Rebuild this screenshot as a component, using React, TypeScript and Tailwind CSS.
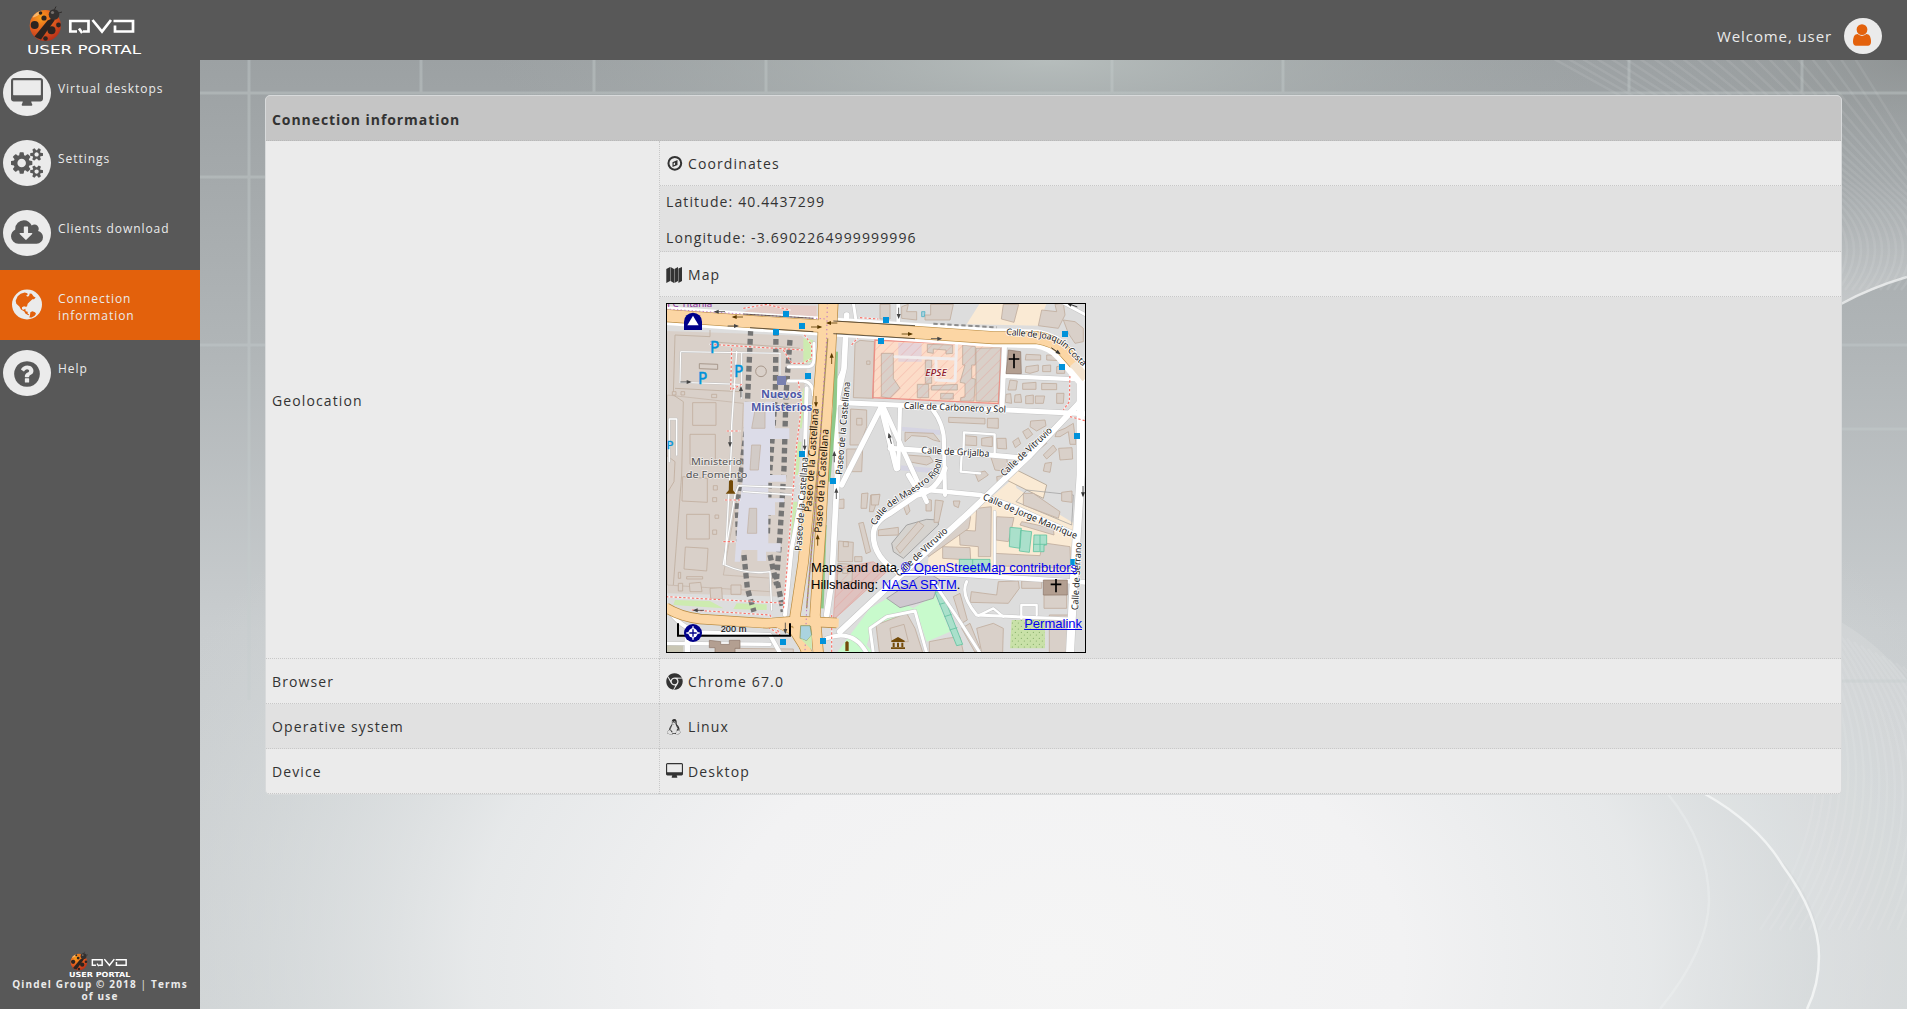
import React from "react";
import { FaChrome, FaLinux } from "react-icons/fa";

const ICONS = {
  desktop:
    "M1792 992v-832q0-13-9.5-22.5t-22.5-9.5h-1600q-13 0-22.5 9.5t-9.5 22.5v832q0 13 9.5 22.5t22.5 9.5h1600q13 0 22.5-9.5t9.5-22.5zm128-832v1088q0 66-47 113t-113 47h-544q0 37 16 77.5t32 71 16 43.5q0 26-19 45t-45 19h-512q-26 0-45-19t-19-45q0-14 16-44t32-70 16-78h-544q-66 0-113-47t-47-113v-1088q0-66 47-113t113-47h1600q66 0 113 47t47 113z",
  cogs:
    "M896 896q0-106-75-181t-181-75-181 75-75 181 75 181 181 75 181-75 75-181zm768 512q0-52-38-90t-90-38-90 38-38 90q0 53 37.5 90.5t90.5 37.5 90.5-37.5 37.5-90.5zm0-1024q0-52-38-90t-90-38-90 38-38 90q0 53 37.5 90.5t90.5 37.5 90.5-37.5 37.5-90.5zm-384 421v185q0 10-7 19.5t-16 10.5l-155 24q-11 35-32 76 34 48 90 115 7 11 7 20 0 12-7 19-23 30-82.5 89.5t-78.5 59.5q-11 0-21-7l-115-90q-37 19-77 31-11 108-23 155-7 24-30 24h-186q-11 0-20-7.5t-10-17.5l-23-153q-34-10-75-31l-118 89q-7 7-20 7-11 0-21-8-144-133-144-160 0-9 7-19 10-14 41-53t47-61q-23-44-35-82l-152-24q-10-1-17-9.5t-7-19.5v-185q0-10 7-19.5t16-10.5l155-24q11-35 32-76-34-48-90-115-7-11-7-20 0-12 7-20 22-30 82-89t79-59q11 0 21 7l115 90q34-18 77-32 11-108 23-154 7-24 30-24h186q11 0 20 7.5t10 17.5l23 153q34 10 75 31l118-89q8-7 20-7 11 0 21 8 144 133 144 160 0 8-7 19-12 16-42 54t-45 60q23 48 34 82l152 23q10 2 17 10.5t7 19.5zm640 533v140q0 16-149 31-12 27-30 52 51 113 51 138 0 4-4 7-122 71-124 71-8 0-46-47t-52-68q-20 2-30 2t-30-2q-14 21-52 68t-46 47q-2 0-124-71-4-3-4-7 0-25 51-138-18-25-30-52-149-15-149-31v-140q0-16 149-31 13-29 30-52-51-113-51-138 0-4 4-7 4-2 35-20t59-34 30-16q8 0 46 46.5t52 67.5q20-2 30-2t30 2q51-71 92-112l6-2q4 0 124 70 4 3 4 7 0 25-51 138 17 23 30 52 149 15 149 31zm0-1024v140q0 16-149 31-12 27-30 52 51 113 51 138 0 4-4 7-122 71-124 71-8 0-46-47t-52-68q-20 2-30 2t-30-2q-14 21-52 68t-46 47q-2 0-124-71-4-3-4-7 0-25 51-138-18-25-30-52-149-15-149-31v-140q0-16 149-31 13-29 30-52-51-113-51-138 0-4 4-7 4-2 35-20t59-34 30-16q8 0 46 46.5t52 67.5q20-2 30-2t30 2q51-71 92-112l6-2q4 0 124 70 4 3 4 7 0 25-51 138 17 23 30 52 149 15 149 31z",
  cloud:
    "M1280 928q0-14-9-23t-23-9h-224v-352q0-13-9.5-22.5t-22.5-9.5h-192q-13 0-22.5 9.5t-9.5 22.5v352h-224q-13 0-22.5 9.5t-9.5 22.5q0 14 9 23l352 352q9 9 23 9t23-9l351-351q10-12 10-24zm640 224q0 159-112.5 271.5t-271.5 112.5h-1088q-185 0-316.5-131.5t-131.5-316.5q0-130 70-240t188-165q-2-30-2-43 0-212 150-362t362-150q156 0 285.5 87t188.5 231q71-62 166-62 106 0 181 75t75 181q0 76-41 138 130 31 213.5 135.5t83.500 238.500z",
  question:
    "M1024 1376v-192q0-14-9-23t-23-9h-192q-14 0-23 9t-9 23v192q0 14 9 23t23 9h192q14 0 23-9t9-23zm256-672q0-88-55.5-163t-138.5-116-170-41q-243 0-371 213-15 24 8 42l132 100q7 6 19 6 16 0 25-12 53-68 86-92 34-24 86-24 48 0 85.5 26t37.5 59q0 38-20 61t-68 45q-63 28-115.5 86.5t-52.5 125.5v36q0 14 9 23t23 9h192q14 0 23-9t9-23q0-19 21.5-49.5t54.5-49.5q32-18 49-28.5t46-35 44.5-48 28-60.5 12.5-81zm384 192q0 209-103 385.5t-279.5 279.5-385.5 103-385.5-103-279.5-279.5-103-385.5 103-385.5 279.5-279.5 385.5-103 385.5 103 279.5 279.5 103 385.5z",
  user:
    "M1536 1399q0 109-62.5 187t-150.5 78h-854q-88 0-150.5-78t-62.5-187q0-85 8.5-160.5t31.5-152 58.5-131 94-89 134.5-34.5q131 128 313 128t313-128q76 0 134.5 34.5t94 89 58.5 131 31.5 152 8.5 160.5zm-256-887q0 159-112.5 271.5t-271.5 112.5-271.5-112.5-112.5-271.5 112.5-271.5 271.5-112.5 271.5 112.5 112.5 271.5z",
};

function Glyph({ d, vb, className }: { d: string; vb: string; className: string }) {
  return (
    <svg viewBox={vb} className={className} fill="currentColor">
      <path d={d} />
    </svg>
  );
}

function Logo({ className }: { className: string }) {
  return (
    <svg viewBox="27 5 115 50" className={className}>
      <defs>
        <radialGradient id="bug" cx="0.35" cy="0.25" r="0.8">
          <stop offset="0" stopColor="#f9a01b" />
          <stop offset="0.5" stopColor="#e5601f" />
          <stop offset="1" stopColor="#b52f1a" />
        </radialGradient>
      </defs>
      <circle cx="45.3" cy="25.5" r="15.6" fill="url(#bug)" />
      <path d="M32.500 17a15.600 15.600 0 0 1 9-6.500q0 4-8 7z" fill="#ffd9a0" opacity="0.600" />
      <g fill="#2d2420">
        <path d="M34.500 36.500 47.500 20.500l7-3 0 3-13.500 19q-4-1-6.500-3z" />
        <circle cx="44" cy="18" r="2.600" />
        <circle cx="34.700" cy="25" r="4" />
        <circle cx="40.500" cy="13" r="1.800" />
        <circle cx="51.500" cy="30.300" r="4" />
        <circle cx="58.500" cy="25" r="2.400" />
        <circle cx="45.500" cy="38.500" r="2.300" />
      </g>
      <circle cx="54" cy="14.500" r="5.300" fill="#33302f" />
      <circle cx="52.500" cy="12.500" r="1.600" fill="#77706c" />
      <path d="M54.500 9.500 56 6.500M58.500 13l3.500-1" stroke="#2a2726" strokeWidth="0.900" fill="none" />
      <g fill="none" stroke="#fff" strokeWidth="2.700">
        <path d="M77 31.500H70.300V21H88.500v10.500H83M79 28.500l3.200 4.500" />
        <path d="M92.500 20l9.500 11.500L111 20" />
        <path d="M113.500 21H133v10.500H115V25.500" />
      </g>
      <text
        x="27"
        y="54"
        fontFamily="DejaVu Sans"
        fontSize="13"
        fill="#fff"
        textLength="114"
        letterSpacing="0"
        lengthAdjust="spacingAndGlyphs"
      >
        USER PORTAL
      </text>
    </svg>
  );
}

function Globe() {
  return (
    <svg viewBox="0 0 90 92" className="h-[31px] w-[30px]">
      <circle cx="45" cy="46" r="45" fill="#ebebeb" />
      <path
        fill="#e3610c"
        d="M17 21l9-7 12-4 8 2 1 5-5 3 6 3 4-5 1-5 6 1 6 8 6 3-5 5-5 0-8 8-6 6-2 8-4 1-5-2-6 3 0 6 5 2 5-3 1 7 6 2 0 6 5 2 -3 2-9-5-3-6-10-6-5-9-9-8-2-9 4-9zM55 69l6-3 8 3 3 5-4 6-9 5-7 0 2-7z"
      />
    </svg>
  );
}

const NAV = [
  { label: "Virtual desktops", d: ICONS.desktop, vb: "0 0 1920 1792", cls: "h-[30px] w-8" },
  { label: "Settings", d: ICONS.cogs, vb: "0 0 1920 1792", cls: "h-[30px] w-8" },
  { label: "Clients download", d: ICONS.cloud, vb: "0 0 1920 1792", cls: "h-[30px] w-8" },
  { label: "Connection information", active: true },
  { label: "Help", d: ICONS.question, vb: "0 0 1792 1792", cls: "h-[30px] w-[30px] mt-[2px]" },
];

/* Footprints: points lists in map units (three per pixel). */
const BUILDINGS = [
  "98,323 168,323 168,391 98,391",
  "90,418 166,418 166,508 90,508",
  "68,545 142,550 142,622 66,618",
  "80,658 148,658 148,732 80,732",
  "76,756 144,760 140,828 72,822",
  "88,865 122,862 126,890 90,890",
  "150,880 185,878 187,912 152,910",
  "213,870 243,870 243,898 213,898",
  "585,145 600,136 643,140 640,310 580,308",
  "572,342 620,345 620,395 600,450 570,450",
  "560,462 608,462 605,530 560,530",
  "530,615 552,612 552,640 532,640",
  "605,596 624,594 620,640 603,640",
  "632,600 658,598 640,650 628,650",
  "536,738 580,742 578,800 534,800",
  "534,805 578,808 576,860 532,862",
  "596,685 610,682 632,770 618,776",
  "584,785 606,785 606,800 584,800",
  "660,28 690,28 690,72 660,72",
  "725,35 745,28 740,50 770,50 770,75 725,70",
  "795,60 812,60 812,28 880,28 870,75 795,75",
  "1030,28 1076,28 1062,82 1024,72",
  "1145,45 1190,50 1185,28 1210,24 1215,60 1195,100 1135,92",
  "1210,75 1245,80 1270,100 1270,140 1245,145 1225,115",
  "664,175 700,175 700,250 720,280 690,310 664,305",
  "802,148 878,150 878,175 858,177 858,165 820,162 820,175 802,172",
  "908,150 946,155 946,210 935,210 935,250 946,252 942,318 902,318 902,308 915,306 915,265 900,262 915,210 908,210",
  "948,160 1022,158 1016,320 948,318",
  "772,268 806,268 806,308 772,308",
  "814,272 892,268 892,285 814,285",
  "842,295 880,295 880,312 842,312",
  "796,195 815,195 815,265 796,265",
  "1098,178 1142,180 1142,195 1096,195",
  "1160,180 1200,180 1200,197 1160,195",
  "1098,215 1135,210 1135,228 1110,235 1096,232",
  "1148,212 1172,210 1172,230 1148,230",
  "1190,215 1214,210 1214,235 1190,235",
  "1050,255 1072,258 1068,285 1044,285",
  "1088,265 1128,262 1128,283 1088,283",
  "1145,265 1190,266 1190,284 1145,284",
  "1038,298 1052,296 1055,325 1036,322",
  "1065,300 1082,298 1085,322 1063,322",
  "1097,303 1120,300 1120,326 1097,326",
  "1126,303 1154,303 1150,325 1126,325",
  "1190,295 1212,295 1210,325 1190,325",
  "866,367 975,370 975,387 866,382",
  "982,370 1015,370 1015,400 982,398",
  "735,412 820,415 840,440 820,435 800,425 755,422 735,440",
  "740,480 810,485 820,500 800,510 745,500",
  "914,422 950,425 950,452 914,450",
  "965,430 997,425 997,455 965,452",
  "1010,430 1038,430 1040,462 1012,460",
  "1112,378 1155,375 1158,392 1130,408 1110,395",
  "1088,410 1105,400 1118,418 1100,432",
  "1058,440 1075,428 1082,446 1066,458",
  "1120,455 1150,430 1160,445 1132,468",
  "1150,480 1180,450 1190,465 1160,492",
  "1215,400 1240,385 1248,448 1230,448 1225,410 1200,425 1185,425 1190,410",
  "1196,460 1236,458 1238,492 1200,495",
  "1155,505 1175,502 1170,532 1150,528",
  "993,488 1040,485 1045,530 1005,525",
  "945,535 975,528 985,540 955,560",
  "634,600 660,598 655,630 634,630",
  "655,705 715,697 715,720 655,722",
  "727,625 742,620 750,648 740,660",
  "798,612 814,615 814,648 798,648",
  "826,615 850,618 836,682 822,682",
  "880,618 900,618 895,638 882,632",
  "708,758 775,680 792,692 720,775",
  "950,640 994,635 992,785 955,785 955,755 900,750 898,705 946,708",
  "1010,665 1062,668 1055,700 1045,740 1008,735",
  "806,785 926,700 932,665 924,660 800,775",
  "848,755 930,758 932,795 848,790",
  "1085,680 1180,700 1182,720 1080,690",
  "1002,775 1140,782 1145,758 1160,745 1230,755 1232,820 1002,812",
  "1090,595 1120,595 1200,650 1195,670 1090,630",
  "1205,592 1236,588 1236,622 1205,618",
  "1010,545 1040,540 1038,560 1012,562",
  "934,890 1010,900 1015,860 1075,858 1078,880 1045,925 930,922",
  "880,905 900,895 922,975 905,985",
  "905,1000 930,985 960,1060 945,1072",
  "950,1000 1000,985 1030,1000 1028,1072 965,1072",
  "1085,858 1145,858 1145,880 1085,880",
  "1152,900 1220,898 1220,940 1152,940",
  "1168,960 1230,960 1230,1072 1168,1072",
  "648,990 740,955 765,1000 788,1072 658,1072",
  "860,1030 900,1025 910,1072 808,1072 808,1040",
  "18,480 45,500 42,560 18,600",
  "200,1060 400,1062 400,1074 200,1074",
];

const COLONNADES = [
  "M272 105L262 330M268 330L246 510L232 640L236 740",
  "M348 105L346 300L330 520L322 720",
  "M390 135L378 300L372 520L360 720L350 850L370 950",
  "M252 780L262 880L282 950",
  "M330 780L350 870",
];

const ROADS = [
  { d: "M18 935Q60 1000 120 1012L330 1020L360 1074", w: 12 },
  { d: "M18 1045L330 1048", w: 10 },
  { d: "M82 1010V1074", w: 16 },
  { d: "M230 170L215 390L215 440L195 810Q260 840 330 830L335 945", w: 4 },
  { d: "M60 262L62 170L360 175M60 262L240 268M245 175L245 310M360 175V240", w: 3 },
  { d: "M28 500V372H50V480", w: 4 },
  { d: "M385 215H445Q462 215 462 190V145", w: 9 },
  { d: "M385 258H430Q460 262 460 300", w: 9 },
  { d: "M190 808L225 600L235 572L405 578M250 590L400 600", w: 4 },
  { d: "M560 60L552 220L525 340L532 540L515 860L500 960", w: 17 },
  { d: "M552 220Q520 270 518 340", w: 9 },
  { d: "M440 280L432 560L395 760L385 860L375 960", w: 12 },
  { d: "M590 90L580 24", w: 9 },
  { d: "M715 24V85", w: 12 },
  { d: "M520 322L1278 356", w: 15 },
  { d: "M1034 140L1026 335", w: 15 },
  { d: "M1030 243L1250 253", w: 13 },
  { d: "M1240 170L1262 260V320L1110 480L920 660L700 860L540 1010", w: 18 },
  { d: "M1262 240L1262 540L1240 880L1230 1074", w: 24 },
  { d: "M664 335L545 570", w: 16 },
  { d: "M664 335L710 520", w: 18 },
  { d: "M670 335L800 620", w: 14 },
  { d: "M720 340L715 520", w: 12 },
  { d: "M690 460L990 480L1080 488", w: 15 },
  { d: "M815 340Q855 390 852 450L855 600", w: 12 },
  { d: "M910 480L912 412L1004 418L1004 480M905 480L902 530L960 535", w: 7 },
  { d: "M855 520Q830 590 770 600L690 655Q640 680 640 720Q640 790 720 835", w: 16 },
  { d: "M745 540L770 582L960 600L1060 635L1250 720", w: 14 },
  { d: "M720 835L850 835L1278 862", w: 14 },
  { d: "M1004 650V830", w: 7 },
  { d: "M820 860L900 980L960 1074M920 860Q900 900 950 960L1230 972", w: 9 },
  { d: "M955 962L1000 940L1030 965M1084 970V930H1130V960", w: 7 },
  { d: "M640 1074L630 1000L680 965L765 948L800 1074", w: 9 },
  { d: "M500 1030Q580 1000 620 1074", w: 12 },
  { d: "M1210 24L1278 60", w: 9 },
];

const FOOTPATHS = [
  "M18 42L475 68",
  "M150 148L430 165M215 160L212 285L245 268M370 165L395 205L430 205L455 190V150L430 115",
  "M415 260L425 330L410 450L395 640L380 830L370 945",
  "M18 905L380 925",
  "M95 945L330 960L360 1020L300 980",
  "M200 408H240M190 740H225M195 615H240",
  "M250 40L320 28L390 45M575 150L600 120L655 118M600 68L655 72",
  "M1230 230L1228 320L1210 345M1230 365L1278 378",
  "M515 960V1074",
];

const STOPS = [
  [378, 57], [426, 93], [348, 111], [444, 243], [426, 477], [678, 75], [663, 138],
  [1215, 117], [1206, 216], [1251, 423], [519, 558], [369, 1041], [489, 1038], [1240, 801],
];

const ARROWS = [
  [178, 50, 180, "#444"], [232, 66, 180, "#5a3a00"], [220, 93, 0, "#444"], [470, 96, 0, "#5a3a00"],
  [515, 84, 180, "#5a3a00"], [742, 117, 0, "#5a3a00"], [830, 131, 0, "#444"], [1188, 168, 35, "#333"],
  [716, 55, 90, "#444"], [78, 261, 0, "#444"], [243, 290, -90, "#444"], [210, 440, 90, "#444"],
  [515, 190, -90, "#5a3a00"], [468, 320, 90, "#5a3a00"], [434, 450, 90, "#444"], [523, 485, -90, "#444"],
  [529, 595, -90, "#444"], [473, 735, -90, "#5a3a00"], [115, 946, 180, "#444"], [376, 1000, 90, "#444"],
  [690, 430, -105, "#444"], [1269, 590, 90, "#333"], [1236, 30, 200, "#333"],
] as [number, number, number, string][];

function Arrow({ x, y, a, c }: { x: number; y: number; a: number; c: string }) {
  return (
    <g transform={`translate(${x} ${y}) rotate(${a})`} fill={c} stroke={c}>
      <path d="M-17 0H12" strokeWidth="2.500" />
      <path d="M2-6L17 0L2 6Z" stroke="none" />
    </g>
  );
}

function Label({ x, y, len, a = 0, size = 27, children }: {
  x: number; y: number; len: number; a?: number; size?: number; children: string;
}) {
  return (
    <text
      transform={`translate(${x} ${y}) rotate(${a})`}
      fontSize={size}
      textLength={len}
      lengthAdjust="spacingAndGlyphs"
    >
      {children}
    </text>
  );
}

function StreetMap() {
  return (
    <svg
      viewBox="18 24 1260 1050"
      className="block h-[350px] w-[420px] tracking-normal"
      fontFamily="Noto Sans, Open Sans, sans-serif"
    >
      <defs>
        <pattern id="hatch" width="22" height="22" patternUnits="userSpaceOnUse" patternTransform="rotate(45)">
          <path d="M0 0V22" stroke="#f08a80" strokeWidth="2" opacity="0.700" />
        </pattern>
        <pattern id="dots" width="18" height="18" patternUnits="userSpaceOnUse">
          <circle cx="4" cy="4" r="1.800" fill="#7da862" />
          <circle cx="13" cy="12" r="1.800" fill="#7da862" />
        </pattern>
        <path id="joaquin" d="M1038 119Q1105 125 1150 130Q1195 137 1225 170Q1250 200 1278 222" />
        <path id="ripoll" d="M647 692Q665 652 720 617Q790 577 822 548Q840 530 848 490L852 450" />
      </defs>
      <rect x="18" y="24" width="1260" height="1050" fill="#dddddd" />

      {/* land use */}
      <path d="M18 108L425 122L450 150L430 300L405 560L375 880L370 905L18 895Z" fill="#d9d0c9" />
      <path d="M22 300L250 325L240 560L190 840L340 850L330 890L22 870Z" fill="#d9d0c9" stroke="#c3b2a5" strokeWidth="2" />
      <path d="M45 120L150 125V105M150 140L420 160M45 280L240 290M45 120L40 300L70 320L65 540L40 870" fill="none" stroke="#bfae9f" strokeWidth="2.500" />
      <path d="M320 28L470 32V65L250 50Z" fill="#e5ccc6" />
      <path d="M430 130L460 135L455 200L430 205ZM430 280H440L425 400H418ZM413 440H425L415 540H405ZM400 620H412L405 740H392ZM45 915L150 918L190 940L40 930ZM230 925L320 928V945L220 942Z" fill="#cdebb0" />
      <path d="M645 135L1026 153L1015 326L638 308Z" fill="#fcdcc8" />
      <path d="M715 143L785 145V200L715 200Z" fill="#e6d3d8" />
      <path d="M960 24H1160L1135 92L920 88Z" fill="#faead4" />
      <path d="M990 610L1060 550L1070 580L1250 690L1230 830L1100 840L800 850L805 790L930 650Z" fill="#faead4" />
      <path d="M1030 550L1060 520L1160 570L1150 610L1100 585Z" fill="#faead4" stroke="#a59480" strokeWidth="2" />
      <path d="M700 770L695 745L740 690L800 673L835 675L835 690L730 790Z" fill="#d6d3cf" stroke="#888" strokeWidth="2" />
      <path d="M1068 620L1100 585L1240 600L1235 690Z" fill="none" stroke="#999" strokeWidth="2" />
      <path d="M530 820L640 800L680 830L520 975Z" fill="#dfc2bf" />
      <path d="M530 1074L630 940L690 905L760 940L825 900L870 1010L800 1040L770 950L640 990L620 1050L640 1074Z" fill="#c8facc" />
      <path d="M680 910L800 830L840 855L820 910L770 925L720 938Z" fill="#cfc8cf" stroke="#8f8b92" strokeWidth="2" />
      <path d="M1055 975H1155V1060H1050Z" fill="#c9e1a8" />
      <path d="M1055 975H1155V1060H1050Z" fill="url(#dots)" />
      <path d="M18 1040H70V1074H18Z" fill="#c9c6b4" />
      <path d="M725 395L840 405V420L725 408ZM710 510L825 520V535L710 525Z" fill="#d5d4e2" />

      {/* railway station and arcades */}
      {COLONNADES.map((d) => (
        <path key={d} d={d} fill="none" stroke="#757575" strokeWidth="16" strokeDasharray="17 10" />
      ))}
      <path d="M252 320H285V345H315V320H345V400H388V432H330V540H378V560H325V620H345V660H325V745H362V770H318V798H292V765H245L240 800H224L238 610H372V622H240L250 540Z" fill="#dcdce8" />
      <path d="M275 450H302L295 525H270ZM268 640H290V715H262ZM285 345H315V400H275Z" fill="#d2cbc7" stroke="#bfae9f" strokeWidth="2" />

      <g fill="#d9d0c9" stroke="#c0ad9e" strokeWidth="2.500">
        {BUILDINGS.map((p) => (
          <polygon key={p} points={p} />
        ))}
        <path d="M37 290H48V300H37ZM63 290H74V300H63ZM155 298H170V308H155ZM160 572H172V585H160ZM158 608H170V620H158ZM165 660H176V670H165ZM158 705H170V718H158ZM55 832H62V850H55ZM80 845H128V852H80ZM55 865H68V888H55Z" />
        <path d="M118 206L173 208V223L118 221Z" fill="none" stroke="#9d8d80" />
        <circle cx="303" cy="229" r="16" fill="none" stroke="#9d8d80" />
        <path d="M590 370H606V390H590ZM550 740H565V755H550ZM548 820H563V835H548ZM620 198H630V208H620ZM690 1000L732 988L745 1040H695Z" fill="none" />
      </g>
      <g fill="#aae0cb" stroke="#63c3a0" strokeWidth="2.500">
        <path d="M1050 697L1084 700L1080 760L1048 755ZM1082 706L1115 710L1108 772L1078 768ZM1122 720H1160V750H1152V770H1120ZM1140 720V768M1120 748H1158M898 793H990V825H898ZM938 793V825M825 892L845 888L908 1048L890 1052ZM838 928L860 922M853 965L875 958M868 1005L892 998" />
      </g>
      <path d="M645 135L1026 153L1015 326L638 308Z" fill="url(#hatch)" stroke="#ec8f85" strokeWidth="4" />
      <path d="M530 820L640 800L680 830L520 975Z" fill="url(#hatch)" stroke="#e0a19a" strokeWidth="2" />

      {/* minor streets */}
      <g fill="none" strokeLinejoin="round" strokeLinecap="round">
        {ROADS.map((r) => (
          <path key={r.d} d={r.d} stroke="#c4c4c4" strokeWidth={r.w + 3} />
        ))}
        {ROADS.map((r) => (
          <path key={r.d} d={r.d} stroke="#ffffff" strokeWidth={r.w} />
        ))}
        <path d="M705 185L885 192M890 145L885 258L828 255V195" stroke="#f1ecec" strokeWidth="9" />
        {FOOTPATHS.map((d) => (
          <path key={d} d={d} stroke="#ffffff" strokeWidth="5" strokeOpacity="0.600" />
        ))}
        {FOOTPATHS.map((d) => (
          <path key={d} d={d} stroke="#f8746b" strokeWidth="3.500" strokeDasharray="7 6" strokeLinecap="butt" />
        ))}
      </g>

      {/* main avenues */}
      <g fill="none" strokeLinejoin="round">
        <path d="M528 170L524 340L505 560M494 690L485 940" stroke="#8fc98a" strokeWidth="12" />
        <path d="M18 62L300 82L630 103L1000 128L1130 132Q1180 140 1210 175L1278 255" stroke="#ffffff" strokeWidth="56" />
        <g stroke="#b98b41">
          <path d="M18 62L300 82L630 103L1000 128L1130 128Q1180 135 1210 165L1245 205" strokeWidth="39" />
          <path d="M492 24L488 150L464 440L445 640L430 800L405 965L440 1074" strokeWidth="33" />
          <path d="M519 24L512 160L495 440L482 700L465 960L475 1074" strokeWidth="33" />
          <path d="M18 938Q60 965 120 972L320 985L410 978L530 984" strokeWidth="31" />
          <path d="M340 980L400 1010L440 1074" strokeWidth="23" />
        </g>
        <g stroke="#fcd6a4">
          <path d="M18 62L300 82L630 103L1000 128L1130 128Q1180 135 1210 165L1250 210" strokeWidth="35" />
          <path d="M492 20L488 150L464 440L445 640L430 800L405 965L442 1078" strokeWidth="29" />
          <path d="M519 20L512 160L495 440L482 700L465 960L475 1078" strokeWidth="29" />
          <path d="M14 936Q60 965 120 972L320 985L410 978L536 984" strokeWidth="27" />
          <path d="M340 982L400 1010L440 1074" strokeWidth="19" />
        </g>
        <path d="M503 130L480 440L465 640L440 940" stroke="#a89158" strokeWidth="4" />
        <path d="M502 24L500 130L475 520L440 940L435 1070" stroke="#ba73c4" strokeWidth="3" strokeDasharray="4 9" />
        <path d="M18 42L230 56L500 72" stroke="#c77fc9" strokeWidth="3" strokeDasharray="4 7" />
        <path d="M250 57L460 70M270 98L460 110M520 78L765 92M520 116L765 131" stroke="#4a4030" strokeWidth="2.500" />
        <path d="M820 86L1010 97" stroke="#8c8c8c" strokeWidth="6" strokeDasharray="13 8" />
        <path d="M1240 205L1278 250" stroke="#f3e3cf" strokeWidth="26" />
      </g>
      <path d="M422 992H450L455 1020L440 1038L420 1030Z" fill="#aad3df" stroke="#8a9c66" strokeWidth="2.500" />
      <path d="M420 1030L440 1038L455 1020V1064Z" fill="#cdebb0" />
      <path d="M785 50H795L793 65H785Z" fill="#aad3df" stroke="#35a7bd" strokeWidth="2" />

      {/* dark landmark buildings */}
      <path d="M1045 165L1082 170L1084 236H1038L1042 200Z" fill="#b39f91" stroke="#8c7668" strokeWidth="2" />
      <path d="M1150 855L1222 855V900H1150Z" fill="#b39f91" stroke="#8c7668" strokeWidth="2" />
      <path d="M148 1036L182 1040V1048H208V1036H240V1060H225V1074H165V1058H148Z" fill="#b39f91" stroke="#8c7668" strokeWidth="2" />
      <path d="M1062 176V220M1046 192H1078M1188 852V892M1172 868H1204" stroke="#000" strokeWidth="5" />

      {ARROWS.map(([x, y, a, c]) => (
        <Arrow key={`${x}-${y}`} x={x} y={y} a={a} c={c} />
      ))}
      {STOPS.map(([x, y]) => (
        <rect key={`${x}-${y}`} x={x - 9} y={y - 9} width="18" height="18" fill="#0092da" />
      ))}
      <rect x="351" y="243" width="27" height="27" fill="#7981b0" />
      <g fill="#734a08">
        <path d="M207 557L213 555L219 557V586L227 596H197L206 586ZM556 1042L561 1038L566 1042V1068H556Z" />
        <path d="M694 1037L714 1026L734 1037V1041H694ZM698 1043H704V1056H698ZM711 1043H717V1056H711ZM724 1043H730V1056H724ZM693 1057H735V1062H693Z" />
      </g>

      {/* labels */}
      <g fill="#0092da" stroke="#0092da" strokeWidth="1.200" fontFamily="DejaVu Sans" fontSize="45">
        <text x="150" y="175">P</text>
        <text x="222" y="246">P</text>
        <text x="114" y="267">P</text>
        <text x="20" y="463" fontSize="32">P</text>
      </g>
      <text x="22" y="36" fontSize="26" fill="#8a2a9a" textLength="135" lengthAdjust="spacingAndGlyphs">
        FC Titania
      </text>
      <g fill="#4f5aa8" fontWeight="bold" stroke="#ffffff" strokeWidth="5" paintOrder="stroke" strokeOpacity="0.800">
        <Label x={303} y={309} len={123} size={29}>Nuevos</Label>
        <Label x={273} y={349} len={184} size={29}>Ministerios</Label>
      </g>
      <g fill="#555555" stroke="#ffffff" strokeWidth="4" paintOrder="stroke" strokeOpacity="0.600">
        <Label x={93} y={509} len={153} size={29}>Ministerio</Label>
        <Label x={77} y={549} len={185} size={29}>de Fomento</Label>
      </g>
      <g fill="#8f1a2c" fontStyle="italic" fontWeight="500" stroke="#ffffff" strokeWidth="4" paintOrder="stroke" strokeOpacity="0.600">
        <Label x={796} y={244} len={64} size={27}>EPSE</Label>
      </g>
      <g fill="#222222" stroke="#ffffff" strokeWidth="5" paintOrder="stroke" strokeOpacity="0.850">
        <Label x={731} y={341} len={307} a={2.2} size={28}>Calle de Carbonero y Sol</Label>
        <Label x={784} y={475} len={204} a={2.8} size={28}>Calle de Grijalba</Label>
        <Label x={1032} y={545} len={200} a={-43} size={28}>Calle de Vitruvio</Label>
        <Label x={718} y={846} len={200} a={-43} size={28}>Calle de Vitruvio</Label>
        <Label x={967} y={613} len={304} a={23} size={28}>Calle de Jorge Manrique</Label>
        <Label x={1254} y={946} len={204} a={-87} size={28}>Calle de Serrano</Label>
        <Label x={546} y={540} len={280} a={-85} size={28}>Paseo de la Castellana</Label>
        <Label x={424} y={768} len={282} a={-86} size={28}>Paseo de la Castellana</Label>
        <text fontSize="27">
          <textPath href="#joaquin" textLength="262">Calle de Joaquín Costa</textPath>
        </text>
        <text fontSize="27">
          <textPath href="#ripoll" textLength="290">Calle del Maestro Ripoll</textPath>
        </text>
      </g>
      <g fill="#1c1408">
        <Label x={454} y={652} len={312} a={-86} size={30}>Paseo de la Castellana</Label>
        <Label x={484} y={714} len={312} a={-86} size={30}>Paseo de la Castellana</Label>
      </g>

      {/* map controls */}
      <path d="M72 105V80A27 27 0 0 1 126 80V105Z" fill="#00008b" />
      <path d="M99 62L116 91H82Z" fill="#fff" />
      <path d="M54 985V1022H390V985" fill="none" stroke="#000" strokeWidth="6" />
      <text x="182" y="1011" fontFamily="Liberation Sans" fontSize="26" textLength="77" lengthAdjust="spacingAndGlyphs">
        200 m
      </text>
      <circle cx="99" cy="1014" r="27" fill="#00008b" />
      <circle cx="99" cy="1014" r="14" fill="#fff" />
      <path d="M99 994V1034M79 1014H119" stroke="#fff" strokeWidth="4" />
      <path d="M99 1003V1025M88 1014H110" stroke="#00008b" strokeWidth="4" />
    </svg>
  );
}

const RIPPLES = Array.from({ length: 22 }, (_, i) => i * 7);

function Backdrop() {
  return (
    <svg viewBox="200 60 1707 949" preserveAspectRatio="none" className="absolute inset-0 h-full w-full">
      <defs>
        <linearGradient id="base" x1="0" y1="0" x2="0" y2="1">
          <stop offset="0" stopColor="#9ca1a3" />
          <stop offset="0.300" stopColor="#b0b5b7" />
          <stop offset="0.600" stopColor="#c9cdcf" />
          <stop offset="1" stopColor="#cfd3d5" />
        </linearGradient>
        <radialGradient id="glow" gradientUnits="userSpaceOnUse" cx="0" cy="0" r="1" gradientTransform="translate(1060 960) scale(980 680)">
          <stop offset="0" stopColor="#f5f5f5" />
          <stop offset="0.350" stopColor="#f2f2f3" />
          <stop offset="0.600" stopColor="#e9ebec" stopOpacity="0.900" />
          <stop offset="0.800" stopColor="#dadedf" stopOpacity="0.600" />
          <stop offset="1" stopColor="#d0d4d4" stopOpacity="0" />
        </radialGradient>
        <radialGradient id="haze" gradientUnits="userSpaceOnUse" cx="0" cy="0" r="1" gradientTransform="translate(1050 60) scale(560 120)">
          <stop offset="0" stopColor="#b6bdbc" />
          <stop offset="1" stopColor="#a5abab" stopOpacity="0" />
        </radialGradient>
        <radialGradient id="shade" gradientUnits="userSpaceOnUse" cx="0" cy="0" r="1" gradientTransform="translate(1907 60) scale(260 120)">
          <stop offset="0" stopColor="#8b8f8f" stopOpacity="0.700" />
          <stop offset="1" stopColor="#9a9f9f" stopOpacity="0" />
        </radialGradient>
        <linearGradient id="fold" x1="0" y1="0" x2="0" y2="1">
          <stop offset="0" stopColor="#ffffff" stopOpacity="0" />
          <stop offset="1" stopColor="#ffffff" stopOpacity="0.280" />
        </linearGradient>
      </defs>
      <rect x="200" y="60" width="1707" height="949" fill="url(#base)" />
      <rect x="200" y="60" width="1707" height="949" fill="url(#glow)" />
      <rect x="200" y="60" width="1707" height="200" fill="url(#haze)" />
      <rect x="1600" y="60" width="307" height="200" fill="url(#shade)" />
      <path d="M1841 180H1907V276L1841 303Z" fill="url(#fold)" />
      <path d="M1841 622Q1880 645 1907 680V1009H1807Q1860 900 1705 793H1841Z" fill="#ffffff" opacity="0.120" />
      <g fill="none" stroke="#ffffff" strokeWidth="2.500" opacity="0.080">
        {RIPPLES.map((o) => (
          <path key={o} d={`M${1520 + o * 2.2} 40L${1790 + o} 190Q${1850 + o} 240 ${1810 + o} 290`} />
        ))}
        {RIPPLES.map((o) => (
          <path key={o} d={`M${1770 + o} ${600 + o * 0.5}Q${1870 + o} 770 ${1760 + o * 1.4} 930`} />
        ))}
      </g>
      <path
        d="M249 60V700M200 93H1907M200 177H265M200 345H265M421 60V93M594 60V93M766 60V93M1112 60V93M1283 60V93M1629 60V93M1802 60V93M1841 345H1907M1841 429H1907M1841 681H1907"
        stroke="#c6cccc"
        strokeWidth="3"
        opacity="0.400"
        fill="none"
      />
      <g fill="none" stroke="#f1f3f3">
        <path d="M1841 304Q1870 288 1907 277" strokeWidth="2.500" opacity="0.750" />
        <path d="M1705 794Q1758 824 1783 866Q1819 915 1819 956Q1819 985 1807 1009" strokeWidth="2.500" />
        <path d="M1668 794Q1709 845 1709 901Q1708 950 1660 1009" strokeWidth="2.500" opacity="0.350" />
      </g>
    </svg>
  );
}

const ROW = "flex h-[45px] items-center border-b border-dotted border-[#c8c8c8] pt-[2px] pl-[6px]";

export default function App() {
  return (
    <div className="h-[1009px] w-[1920px] overflow-hidden bg-white font-['Open_Sans',sans-serif] tracking-[1px]">
      <div className="flex h-full w-[1907px] flex-col">
        <header className="flex h-[60px] shrink-0 items-start justify-between bg-[#585858]">
          <Logo className="mt-[5px] ml-[27px] h-[50px] w-[115px]" />
          <div className="mt-[18px] mr-[25px] flex items-center gap-3">
            <span className="text-[15px] tracking-[0.9px] text-[#ebebeb]">Welcome, user</span>
            <span className="flex h-9 w-[38px] items-center justify-center rounded-[50%] bg-[#ebebeb] text-[#e3610c]">
              <Glyph d={ICONS.user} vb="256 128 1280 1536" className="mr-[2px] mb-[2px] h-[22px] w-[18px]" />
            </span>
          </div>
        </header>
        <div className="flex min-h-0 flex-1">
          <aside className="flex w-[200px] shrink-0 flex-col justify-between bg-[#585858] text-[#ebebeb]">
            <nav>
              {NAV.map((n) => (
                <div
                  key={n.label}
                  className={n.active ? "flex h-[70px] bg-[#e3610c]" : "flex h-[70px]"}
                >
                  <span
                    className={
                      n.active
                        ? "mt-[11px] ml-[3px] flex h-[46px] w-12 items-center justify-center"
                        : "mt-[10px] ml-[3px] flex h-[46px] w-12 items-center justify-center rounded-[50%] bg-[#ebebeb] text-[#585858]"
                    }
                  >
                    {n.d ? <Glyph d={n.d} vb={n.vb!} className={n.cls!} /> : <Globe />}
                  </span>
                  <span className="mt-5 ml-[7px] w-[120px] text-[12px] leading-[17px] tracking-[0.95px]">{n.label}</span>
                </div>
              ))}
            </nav>
            <footer className="mb-[7px] flex flex-col items-center text-center text-[10px] leading-3 font-bold tracking-[1.15px]">
              <Logo className="h-[27px] w-[62px]" />
              <div className="w-[184px]">
                Qindel Group © 2018 <span className="font-normal">|</span> Terms
                <br />
                of use
              </div>
            </footer>
          </aside>
          <main className="relative flex-1">
            <Backdrop />
            <section className="relative mt-[35px] ml-[65px] w-[1577px] overflow-hidden rounded-[5px] border border-[#d8dadb] bg-[#ebebeb] text-[14px] leading-5 tracking-[1.12px] text-[#333]">
              <h1 className="flex h-[45px] items-center border-b border-dotted border-[#b8b8b8] bg-[#c5c5c5] pt-[3px] pl-[6px] font-bold tracking-[0.93px]">
                Connection information
              </h1>
              <div className="grid grid-cols-[393px_1fr]">
                <div className="flex items-center border-b border-dotted border-[#c8c8c8] pt-[2px] pl-[6px]">Geolocation</div>
                <div className="border-l border-dotted border-[#c8c8c8]">
                  <div className={ROW + " gap-[5px]"}>
                    <svg viewBox="0 0 16 16" className="mb-px h-[17px] w-[17px]" fill="none" stroke="#333">
                      <circle cx="8.300" cy="7.800" r="6" strokeWidth="1.900" />
                      <path d="M10.800 4.800V9.300L6.100 11.300V6.800Z" fill="#333" stroke="none" />
                      <path d="M8.500 7.100V9.200L7.200 9.700V7.800Z" fill="#ebebeb" stroke="none" />
                    </svg>
                    Coordinates
                  </div>
                  <div className="flex h-[66px] flex-col justify-between border-b border-dotted border-[#c8c8c8] bg-[#e1e1e1] pt-[6px] pb-[3px] pl-[6px]">
                    <span>Latitude: 40.4437299</span>
                    <span>Longitude: -3.6902264999999996</span>
                  </div>
                  <div className={ROW + " gap-[6px]"}>
                    <svg viewBox="0 0 16 16" className="mb-px h-4 w-4" fill="#333">
                      <path d="M.3 2L4.100 0V14L.3 16ZM4.500 0L8 2V16L4.500 14ZM8.400 2L12 0V14L8.400 16ZM12.400 1.500L16 0V14L12.400 16Z" />
                    </svg>
                    Map
                  </div>
                  <div className="h-[362px] border-b border-dotted border-[#c8c8c8] bg-[#e1e1e1] pt-[6px] pl-[6px]">
                    <div className="relative h-[350px] w-[420px]">
                      <StreetMap />
                      <div className="pointer-events-none absolute inset-0 border border-black" />
                      <div className="absolute top-[256px] left-[145px] font-['Liberation_Sans',sans-serif] text-[13px] leading-[17px] tracking-normal whitespace-nowrap text-black">
                        Maps and data <a className="text-[#0000ee] underline">© OpenStreetMap contributors</a>
                        <br />
                        Hillshading: <a className="text-[#0000ee] underline">NASA SRTM</a>.
                      </div>
                      <a className="absolute top-[312px] right-[4px] font-['Liberation_Sans',sans-serif] text-[13px] leading-[17px] tracking-normal text-[#0000ee] underline">
                        Permalink
                      </a>
                    </div>
                  </div>
                </div>
                <div className={ROW}>Browser</div>
                <div className={ROW + " gap-[5px] border-l"}>
                  <FaChrome className="mb-px h-[17px] w-[17px]" />
                  Chrome 67.0
                </div>
                <div className={ROW + " bg-[#e1e1e1]"}>Operative system</div>
                <div className={ROW + " gap-[6px] border-l bg-[#e1e1e1]"}>
                  <FaLinux className="mb-px h-4 w-4" />
                  Linux
                </div>
                <div className={ROW}>Device</div>
                <div className={ROW + " gap-[5px] border-l"}>
                  <Glyph d={ICONS.desktop} vb="0 0 1920 1792" className="mb-[2px] h-4 w-[17px]" />
                  Desktop
                </div>
              </div>
            </section>
          </main>
        </div>
      </div>
    </div>
  );
}
